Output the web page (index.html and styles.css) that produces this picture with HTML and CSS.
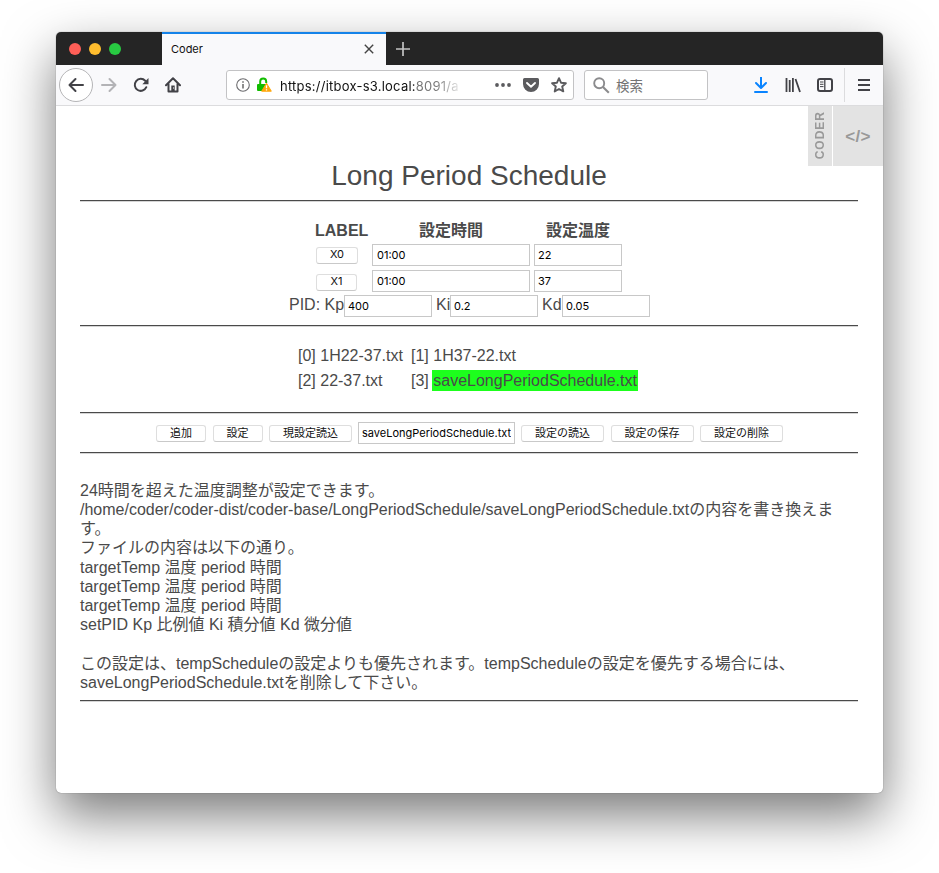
FILE: index.html
```html
<!DOCTYPE html>
<html lang="ja">
<head>
<meta charset="utf-8">
<title>Coder</title>
<link rel="stylesheet" href="styles.css">
</head>
<body>
<div class="window">
  <header class="tabbar">
    <div class="lights"><i class="light red"></i><i class="light yellow"></i><i class="light green"></i></div>
    <div class="tab"><span class="tab-title">Coder</span>
      <svg width="10" height="10" viewBox="0 0 10 10"><path d="M.8.8l8.4 8.4M9.2.8L.8 9.2" stroke="#444" stroke-width="1.4"/></svg>
    </div>
    <svg class="plus" width="14" height="14" viewBox="0 0 14 14"><path d="M7 0v14M0 7h14" stroke="#c4c4c4" stroke-width="1.7"/></svg>
  </header>
  <nav class="toolbar">
    <span class="back"><svg width="16" height="16" viewBox="0 0 16 16" fill="none" stroke="#424247" stroke-width="2" stroke-linecap="round" stroke-linejoin="round"><path d="M15 8H1.5M7.5 2L1.5 8l6 6"/></svg></span>
    <svg class="forward" width="16" height="16" viewBox="0 0 16 16" fill="none" stroke="#b3b3b6" stroke-width="2" stroke-linecap="round" stroke-linejoin="round"><path d="M1 8h13.5M8.500 2l6 6-6 6"/></svg>
    <svg class="reload" width="16" height="16" viewBox="0 0 16 16"><path d="M13.300 10.200A6 6 0 1 1 12.200 3.800" fill="none" stroke="#424247" stroke-width="2" stroke-linecap="round"/><path d="M15.500 1v6.200H9.300z" fill="#424247"/></svg>
    <svg class="home" width="16" height="16" viewBox="0 0 16 16"><path d="M1 8.300L8 1.300l7 7M3.500 7v7.500h9V7" fill="none" stroke="#424247" stroke-width="2" stroke-linecap="round" stroke-linejoin="round"/><path d="M6.300 8.500h3.400V14H6.300z" fill="#424247"/><path d="M8 10.500h1v1H8z" fill="#fff"/></svg>
    <div class="urlbar">
      <svg width="14" height="14" viewBox="0 0 14 14"><circle cx="7" cy="7" r="6.300" fill="none" stroke="#6b6b6e" stroke-width="1.100"/><path d="M7 6v4.500M7 3.200v1.600" stroke="#666" stroke-width="1.500"/></svg>
      <svg class="lock" width="15" height="16" viewBox="0 0 15 16"><path d="M3.200 8V4.500a3 3 0 0 1 6 0V6" fill="none" stroke="#12bc00" stroke-width="2"/><rect x="0" y="7" width="10" height="7" rx="1" fill="#12bc00"/><path d="M9.500 6.200L14.300 14.200H4.700z" fill="#ffa60a" stroke="#ffa60a" stroke-linejoin="round"/><path d="M9.500 8.300v3M9.500 12.300v1.300" stroke="#fff" stroke-width="1.300"/></svg>
      <span class="url">https://itbox-s3.local:<span class="port">8091/a</span></span>
      <svg class="dots" width="16" height="4" viewBox="0 0 16 4" fill="#5b5b5e"><circle cx="2" cy="2" r="1.900"/><circle cx="8" cy="2" r="1.900"/><circle cx="14" cy="2" r="1.900"/></svg>
      <svg class="pocket" width="16" height="16" viewBox="0 0 16 16"><path d="M1.500 1h13A1.500 1.500 0 0 1 16 2.500V7A8 8 0 0 1 0 7V2.500A1.500 1.500 0 0 1 1.500 1z" fill="#5b5b5e"/><path d="M4 6l4 3.700L12 6" fill="none" stroke="#fff" stroke-width="1.900" stroke-linecap="round" stroke-linejoin="round"/></svg>
      <svg class="star" width="16" height="16" viewBox="0 0 16 16"><path d="M8 1.200l2 4.500 4.900.5-3.700 3.300 1.100 4.900L8 12l-4.300 2.400 1.100-4.900L1.100 6.200l4.900-.5z" fill="none" stroke="#5b5b5e" stroke-width="1.900" stroke-linejoin="round"/></svg>
    </div>
    <div class="search">
      <svg width="17" height="17" viewBox="0 0 17 17"><circle cx="6.200" cy="6.200" r="5" fill="none" stroke="#8b8b8d" stroke-width="1.900"/><path d="M10 10l5.800 5.800" stroke="#8b8b8d" stroke-width="2.100"/></svg>
      <span>検索</span>
    </div>
    <svg class="download" width="14" height="16" viewBox="0 0 14 16" fill="none" stroke="#0a84ff" stroke-width="2"><path d="M7 0v10.500M2 6l5 5 5-5" stroke-linejoin="round" stroke-linecap="round"/><path d="M1 15h12" stroke-linecap="round"/></svg>
    <svg class="library" width="16" height="16" viewBox="0 0 16 16" stroke="#424247" stroke-width="1.800"><path d="M1.500 1v14M4.700 3v12M7.900 1v14M10.500 2l4.500 13"/></svg>
    <svg class="sidebar" width="16" height="14" viewBox="0 0 16 14"><rect x="1" y="1" width="14" height="12" rx="2" fill="none" stroke="#424247" stroke-width="2"/><path d="M7.800 1v12" stroke="#424247" stroke-width="1.300"/><path d="M3 4h3.500M3 6.300h3.500M3 8.600h3.500" stroke="#424247"/></svg>
    <svg class="menu" width="12" height="12" viewBox="0 0 12 12"><path d="M0 1h12M0 6h12M0 11h12" stroke="#424247" stroke-width="2"/></svg>
  </nav>
  <main class="page">
    <aside class="coder"><span class="coder-name"><b>CODER</b></span><span class="coder-code">&lt;/&gt;</span></aside>
    <h1>Long Period Schedule</h1>
    <hr>
    <section class="settings">
      <div class="grid">
        <b>LABEL</b><b>設定時間</b><b>設定温度</b>
        <button class="btn x0">X0</button><input value="01:00"><input value="22">
        <button class="btn x1">X1</button><input value="01:00"><input value="37">
      </div>
      <div class="pid">
        <label class="kp">PID: Kp</label><input value="400">
        <label class="ki">Ki</label><input value="0.2">
        <label class="kd">Kd</label><input value="0.05">
      </div>
    </section>
    <hr>
    <section class="files">
      <span>[0] 1H22-37.txt</span><span>[1] 1H37-22.txt</span>
      <span>[2] 22-37.txt</span><span>[3] <mark>saveLongPeriodSchedule.txt</mark></span>
    </section>
    <hr>
    <section class="actions">
      <button class="btn small">追加</button>
      <button class="btn small">設定</button>
      <button class="btn wide">現設定読込</button>
      <input class="filename" value="saveLongPeriodSchedule.txt">
      <button class="btn wide">設定の読込</button>
      <button class="btn wide">設定の保存</button>
      <button class="btn wide">設定の削除</button>
    </section>
    <hr>
    <p class="notes">24時間を超えた温度調整が設定できます。<br><span class="path">/home/coder/coder-dist/coder-base/LongPeriodSchedule/saveLongPeriodSchedule.txt</span>の内容を書き換えま<br>す。<br>ファイルの内容は以下の通り。<br>targetTemp 温度 period 時間<br>targetTemp 温度 period 時間<br>targetTemp 温度 period 時間<br>setPID Kp 比例値 Ki 積分値 Kd 微分値<br><br>この設定は、tempScheduleの設定よりも優先されます。tempScheduleの設定を優先する場合には、<br>saveLongPeriodSchedule.txtを削除して下さい。</p>
    <hr>
  </main>
</div>
</body>
</html>
```
FILE: styles.css
```css
* { box-sizing: border-box; }
body {
  margin: 0;
  padding: 32px 56px 0;
  height: 873px;
  overflow: hidden;
  background: #fff;
  color: #4a4a4a;
  font: 16px/19.25px "Liberation Sans", "Noto Sans CJK JP", sans-serif;
}
svg { display: block; flex: none; }
.window {
  width: 827px;
  height: 761px;
  border-radius: 5px;
  background: #fff;
  overflow: hidden;
  box-shadow: 0 0 1px rgba(0,0,0,.6), 0 22px 52px rgba(0,0,0,.53);
}
.tabbar { height: 33px; background: #252525; display: flex; align-items: center; }
.lights { width: 106px; padding-left: 13px; display: flex; gap: 8px; }
.light { width: 12px; height: 12px; border-radius: 50%; }
.red { background: #ff5f57; }
.yellow { background: #ffbd2e; }
.green { background: #28ca42; }
.tab {
  width: 224px;
  height: 33px;
  border-top: 2px solid #1583e9;
  background: #f9f9fb;
  padding: 0 12px 2px 9px;
  display: flex;
  align-items: center;
  justify-content: space-between;
  color: #111;
  font: 11px "Inter", sans-serif;
}
.plus { margin-left: 10px; }
.toolbar {
  height: 41px;
  background: #f9f9fb;
  border-bottom: 1px solid #dcdcde;
  display: flex;
  align-items: center;
  padding-left: 3px;
}
.back {
  width: 34px;
  height: 34px;
  border: 1px solid #b5b5b7;
  border-radius: 50%;
  background: #fff;
  display: flex;
  align-items: center;
  justify-content: center;
}
.forward { margin-left: 8px; }
.reload { margin-left: 16px; }
.home { margin-left: 16px; }
.urlbar, .search {
  height: 30px;
  border: 1px solid #c3c3c5;
  border-radius: 3px;
  background: #fff;
  display: flex;
  align-items: center;
}
.urlbar { width: 348px; margin-left: 45px; padding-left: 9px; }
.lock { margin-left: 7px; }
.url {
  width: 182px;
  margin-left: 8px;
  padding-top: 1px;
  overflow: hidden;
  white-space: nowrap;
  color: #111;
  font: 13px/20px "Inter", sans-serif;
  letter-spacing: .23px;
  -webkit-mask-image: linear-gradient(to right, #000 155px, transparent 184px);
  mask-image: linear-gradient(to right, #000 155px, transparent 184px);
}
.port { color: #777; }
.dots { margin-left: 33px; }
.pocket { margin-left: 12px; }
.star { margin-left: 12px; }
.search { width: 124px; margin-left: 10px; padding-left: 8px; gap: 6px; color: #737373; font: 13.5px/18px "Noto Sans CJK JP", sans-serif; }
.search span { padding-bottom: 1px; }
.download { margin-left: 46px; }
.library { margin-left: 17px; }
.sidebar { margin-left: 16px; }
.menu { margin-left: 11px; box-sizing: content-box; padding: 11px 0 11px 13px; border-left: 1px solid #dcdcde; }
.page { position: relative; height: 687px; padding: 52px 25px 0 24px; }
.coder { position: absolute; top: 0; right: 0; display: flex; gap: 1px; color: #999; }
.coder-name, .coder-code { height: 60px; background: #e3e3e3; display: flex; align-items: center; justify-content: center; }
.coder-name { width: 24px; padding: 0 0 2px 1px; }
.coder-name b { writing-mode: vertical-rl; transform: rotate(180deg); font-size: 12px; letter-spacing: 1px; }
.coder-code { width: 50px; padding-top: 2px; font-weight: bold; font-size: 17px; letter-spacing: .3px; }
h1 { margin: 0 0 7px; height: 35px; font-size: 28px; line-height: 36px; font-weight: normal; text-align: center; }
hr { margin: 0; height: 2px; border: 0; background: #d5d5d5; border-top: 1px solid #4a4a4a; }
input {
  height: 22px;
  width: 88px;
  margin: 0;
  padding: 0 3px;
  border: 1px solid #c8c8c8;
  background: #fff;
  color: #000;
  font: 11px "Inter", sans-serif;
  outline: none;
}
.grid input { padding-left: 4px; }
.btn {
  height: 17px;
  margin: 0;
  padding: 0;
  border: 1px solid #dedede;
  border-bottom-color: #c9c9c9;
  border-radius: 3px;
  background: #fff;
  color: #111;
  font: 11px/14px "Inter", "Noto Sans CJK JP", sans-serif;
  white-space: nowrap;
}
.settings { height: 123px; padding-top: 16px; }
.grid {
  display: grid;
  grid-template-columns: 52px 158px 88px;
  grid-template-rows: 22px 22px 22px;
  gap: 4px;
  margin-left: 236px;
}
.grid b { text-align: center; line-height: 26px; }
.grid b:first-child { margin-left: -1px; }
.grid input { width: 100%; }
.grid input:nth-child(3n) { padding-left: 3px; }
.x0, .x1 { padding-bottom: 2px; line-height: 13px; }
.x0 { width: 42px; margin-top: 3px; }
.x1 { width: 41px; margin-top: 4px; }
.pid { display: flex; margin: 3px 0 0 209px; }
.kp { width: 55px; }
.ki { width: 18px; padding-left: 4px; }
.kd { width: 24px; padding-left: 4px; }
.pid label { white-space: nowrap; line-height: 19px; }
.files {
  height: 85px;
  padding: 16px 0 0 218px;
  display: grid;
  grid-template-columns: 113px 240px;
  grid-template-rows: 25px 25px;
  line-height: 25px;
}
mark { background: #1dff1d; color: inherit; margin-left: -1px; padding: 2px 1px 2px 1px; }
.actions { height: 38px; padding-left: 76px; display: flex; align-items: center; gap: 6.500px; }
.small { width: 50px; }
.wide { width: 83px; }
.filename { width: 157px; margin: 0 -.5px; }
.notes { margin: 0; height: 246px; padding-top: 26.600px; white-space: nowrap; }
```
